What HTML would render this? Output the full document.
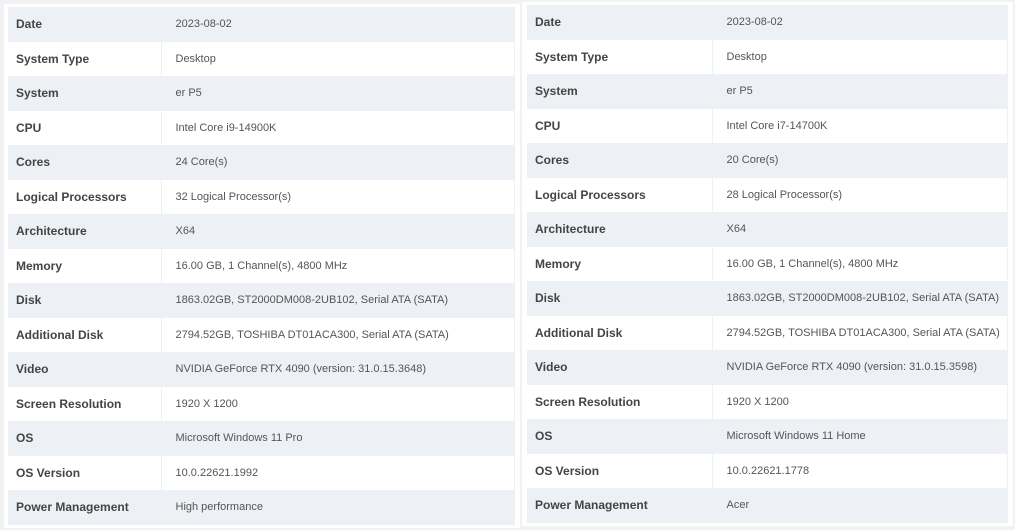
<!DOCTYPE html><html><head><style>
body{margin:0;width:1015px;height:530px;background:#f2f2f2;font-family:"Liberation Sans",sans-serif;font-size:11px;overflow:hidden;position:relative}
.card{position:absolute;background:#fff}
table{position:absolute;border-collapse:collapse;table-layout:fixed}
td{height:34.5px;padding:0 0 0 14px;color:#555;border-right:1px solid #eef0f2;white-space:nowrap;overflow:hidden}
td:first-child{font-weight:bold;color:#444;font-size:12px;padding-left:8px}
tr:nth-child(odd) td{background:#edf1f5}
</style></head><body>
<div class="card" style="left:4px;top:4px;width:516px;height:524px"></div>
<div class="card" style="left:522px;top:2px;width:491px;height:524px"></div>
<table style="left:8px;top:7px;width:507px"><colgroup><col style="width:153px"><col></colgroup>
<tr><td>Date</td><td>2023-08-02</td></tr>
<tr><td>System Type</td><td>Desktop</td></tr>
<tr><td>System</td><td>er P5</td></tr>
<tr><td>CPU</td><td>Intel Core i9-14900K</td></tr>
<tr><td>Cores</td><td>24 Core(s)</td></tr>
<tr><td>Logical Processors</td><td>32 Logical Processor(s)</td></tr>
<tr><td>Architecture</td><td>X64</td></tr>
<tr><td>Memory</td><td>16.00 GB, 1 Channel(s), 4800 MHz</td></tr>
<tr><td>Disk</td><td>1863.02GB, ST2000DM008-2UB102, Serial ATA (SATA)</td></tr>
<tr><td>Additional Disk</td><td>2794.52GB, TOSHIBA DT01ACA300, Serial ATA (SATA)</td></tr>
<tr><td>Video</td><td>NVIDIA GeForce RTX 4090 (version: 31.0.15.3648)</td></tr>
<tr><td>Screen Resolution</td><td>1920 X 1200</td></tr>
<tr><td>OS</td><td>Microsoft Windows 11 Pro</td></tr>
<tr><td>OS Version</td><td>10.0.22621.1992</td></tr>
<tr><td>Power Management</td><td>High performance</td></tr>
</table>
<table style="left:527px;top:5px;width:481px"><colgroup><col style="width:185px"><col></colgroup>
<tr><td>Date</td><td>2023-08-02</td></tr>
<tr><td>System Type</td><td>Desktop</td></tr>
<tr><td>System</td><td>er P5</td></tr>
<tr><td>CPU</td><td>Intel Core i7-14700K</td></tr>
<tr><td>Cores</td><td>20 Core(s)</td></tr>
<tr><td>Logical Processors</td><td>28 Logical Processor(s)</td></tr>
<tr><td>Architecture</td><td>X64</td></tr>
<tr><td>Memory</td><td>16.00 GB, 1 Channel(s), 4800 MHz</td></tr>
<tr><td>Disk</td><td>1863.02GB, ST2000DM008-2UB102, Serial ATA (SATA)</td></tr>
<tr><td>Additional Disk</td><td>2794.52GB, TOSHIBA DT01ACA300, Serial ATA (SATA)</td></tr>
<tr><td>Video</td><td>NVIDIA GeForce RTX 4090 (version: 31.0.15.3598)</td></tr>
<tr><td>Screen Resolution</td><td>1920 X 1200</td></tr>
<tr><td>OS</td><td>Microsoft Windows 11 Home</td></tr>
<tr><td>OS Version</td><td>10.0.22621.1778</td></tr>
<tr><td>Power Management</td><td>Acer</td></tr>
</table>
</body></html>
